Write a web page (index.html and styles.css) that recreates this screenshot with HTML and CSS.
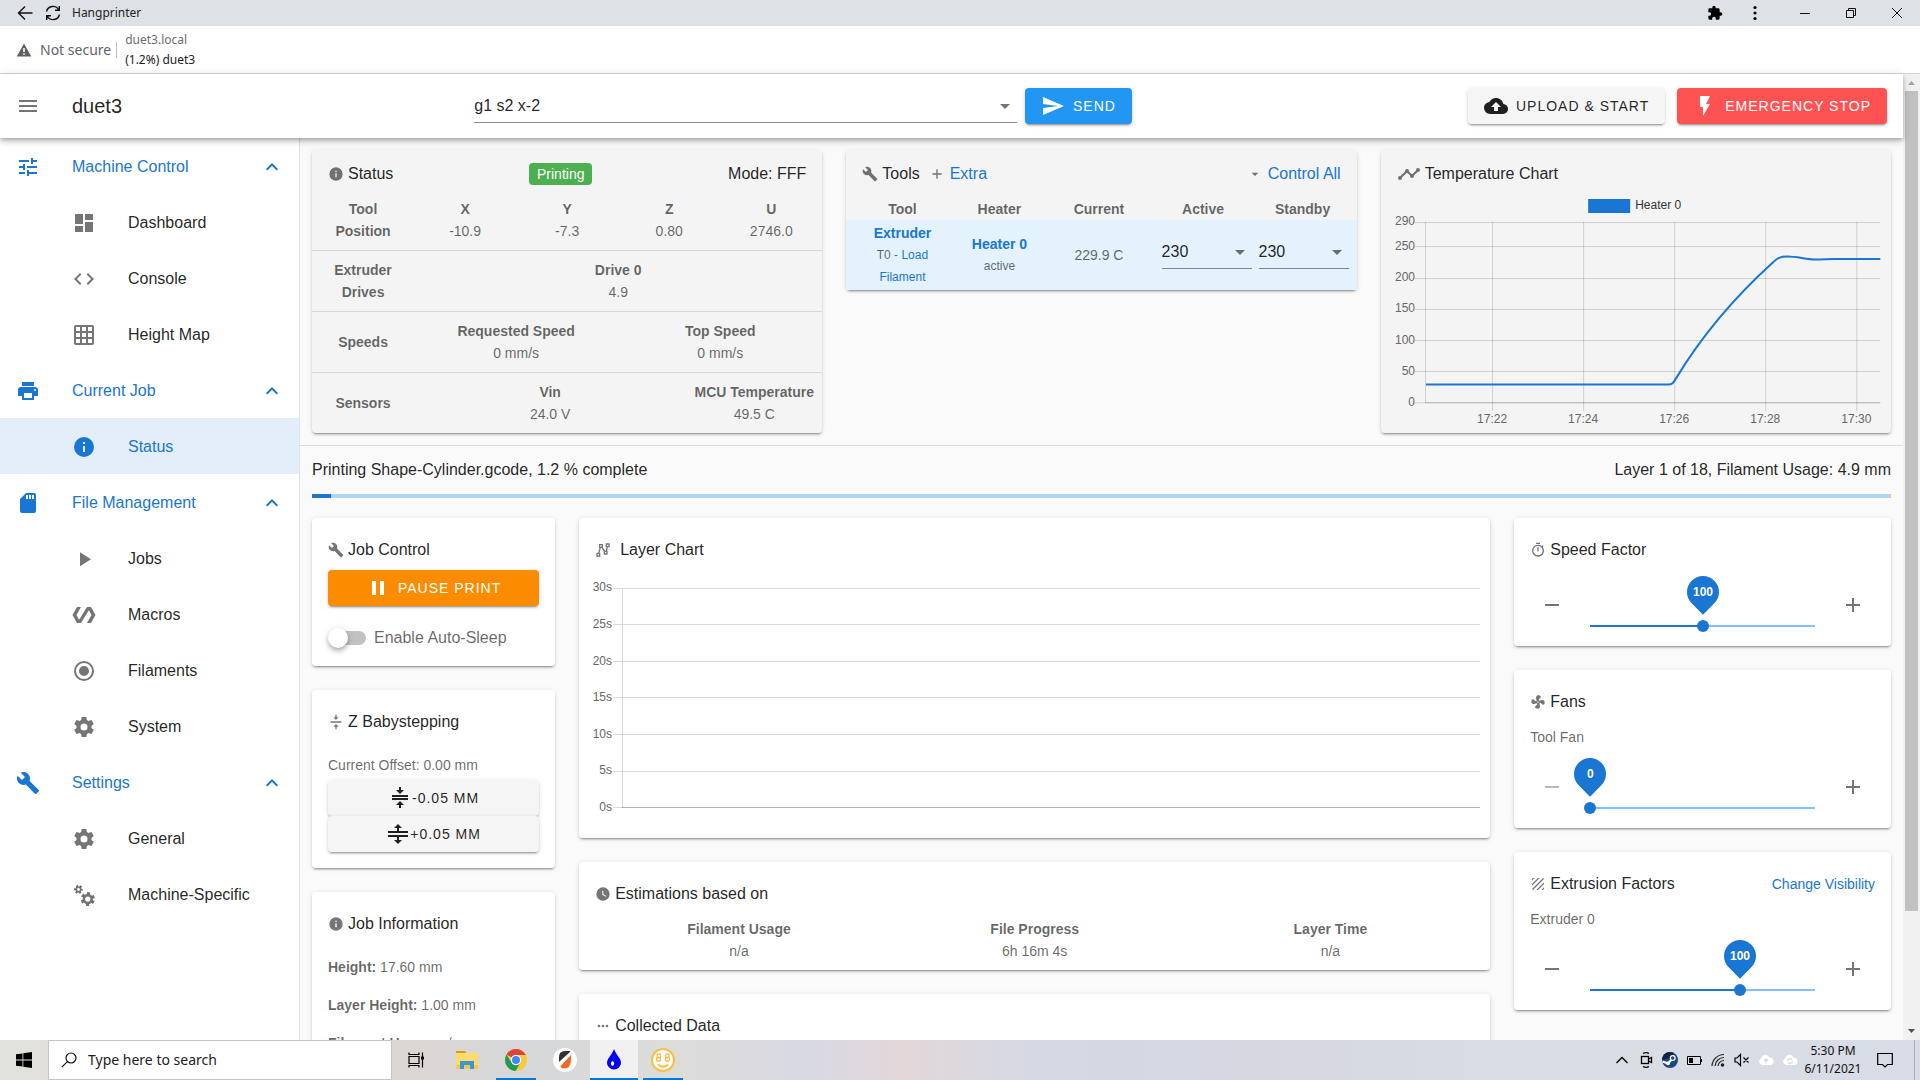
FILE: index.html
```html
<!DOCTYPE html>
<html lang="en">
<head>
<meta charset="utf-8">
<title>(1.2%) duet3</title>
<link rel="stylesheet" href="styles.css">
</head>
<body>
<svg class="sprite" aria-hidden="true">
  <symbol id="i-tune" viewBox="0 0 24 24"><path d="M3,17V19H9V17H3M3,5V7H13V5H3M13,21V19H21V17H13V15H11V21H13M7,9V11H3V13H7V15H9V9H7M21,13V11H11V13H21M15,9H17V7H21V5H17V3H15V9Z"/></symbol>
  <symbol id="i-dashboard" viewBox="0 0 24 24"><path d="M13,3V9H21V3M13,21H21V11H13M3,21H11V15H3M3,13H11V3H3V13Z"/></symbol>
  <symbol id="i-code" viewBox="0 0 24 24"><path d="M14.6,16.6L19.2,12L14.6,7.4L16,6L22,12L16,18L14.6,16.6M9.4,16.6L4.8,12L9.4,7.4L8,6L2,12L8,18L9.4,16.6Z"/></symbol>
  <symbol id="i-grid" viewBox="0 0 24 24"><path d="M10,4V8H14V4H10M16,4V8H20V4H16M16,10V14H20V10H16M16,16V20H20V16H16M14,20V16H10V20H14M8,20V16H4V20H8M8,14V10H4V14H8M8,8V4H4V8H8M10,14H14V10H10V14M4,2H20A2,2 0 0,1 22,4V20A2,2 0 0,1 20,22H4C2.92,22 2,21.1 2,20V4A2,2 0 0,1 4,2Z"/></symbol>
  <symbol id="i-printer" viewBox="0 0 24 24"><path d="M18,3H6V7H18M19,12A1,1 0 0,1 18,11A1,1 0 0,1 19,10A1,1 0 0,1 20,11A1,1 0 0,1 19,12M16,19H8V14H16M19,8H5A3,3 0 0,0 2,11V17H6V21H18V17H22V11A3,3 0 0,0 19,8Z"/></symbol>
  <symbol id="i-info" viewBox="0 0 24 24"><path d="M13,9H11V7H13M13,17H11V11H13M12,2A10,10 0 0,0 2,12A10,10 0 0,0 12,22A10,10 0 0,0 22,12A10,10 0 0,0 12,2Z"/></symbol>
  <symbol id="i-sd" viewBox="0 0 24 24"><path d="M18,8H16V4H18M15,8H13V4H15M12,8H10V4H12M18,2H10L4,8V20A2,2 0 0,0 6,22H18A2,2 0 0,0 20,20V4A2,2 0 0,0 18,2Z"/></symbol>
  <symbol id="i-play" viewBox="0 0 24 24"><path d="M8,5.14V19.14L19,12.14L8,5.14Z"/></symbol>
  <symbol id="i-polymer" viewBox="0 0 24 24"><path d="M19,4H15L7.1,16.63L4.5,12L9,4H5L0.5,12L5,20H9L16.89,7.37L19.5,12L15,20H19L23.5,12L19,4Z"/></symbol>
  <symbol id="i-radio" viewBox="0 0 24 24"><path d="M12,20A8,8 0 0,1 4,12A8,8 0 0,1 12,4A8,8 0 0,1 20,12A8,8 0 0,1 12,20M12,2A10,10 0 0,0 2,12A10,10 0 0,0 12,22A10,10 0 0,0 22,12A10,10 0 0,0 12,2M12,7A5,5 0 0,0 7,12A5,5 0 0,0 12,17A5,5 0 0,0 17,12A5,5 0 0,0 12,7Z"/></symbol>
  <symbol id="i-cog" viewBox="0 0 24 24"><path d="M12,15.5A3.5,3.5 0 0,1 8.5,12A3.5,3.5 0 0,1 12,8.5A3.5,3.5 0 0,1 15.5,12A3.5,3.5 0 0,1 12,15.5M19.43,12.97C19.47,12.65 19.5,12.33 19.5,12C19.5,11.67 19.47,11.34 19.43,11L21.54,9.37C21.73,9.22 21.78,8.95 21.66,8.73L19.66,5.27C19.54,5.05 19.27,4.96 19.05,5.05L16.56,6.05C16.04,5.66 15.5,5.32 14.87,5.07L14.5,2.42C14.46,2.18 14.25,2 14,2H10C9.75,2 9.54,2.18 9.5,2.42L9.13,5.07C8.5,5.32 7.96,5.66 7.44,6.05L4.95,5.05C4.73,4.96 4.46,5.05 4.34,5.27L2.34,8.73C2.21,8.95 2.27,9.22 2.46,9.37L4.57,11C4.53,11.34 4.5,11.67 4.5,12C4.5,12.33 4.53,12.65 4.57,12.97L2.46,14.63C2.27,14.78 2.21,15.05 2.34,15.27L4.34,18.73C4.46,18.95 4.73,19.03 4.95,18.95L7.44,17.94C7.96,18.34 8.5,18.68 9.13,18.93L9.5,21.58C9.54,21.82 9.75,22 10,22H14C14.25,22 14.46,21.82 14.5,21.58L14.87,18.93C15.5,18.67 16.04,18.34 16.56,17.94L19.05,18.95C19.27,19.03 19.54,18.95 19.66,18.73L21.66,15.27C21.78,15.05 21.73,14.78 21.54,14.63L19.43,12.97Z"/></symbol>
  <symbol id="i-cogs" viewBox="0 0 24 24"><g fill="none" stroke="currentColor"><circle cx="6.5" cy="6.5" r="2.3" stroke-width="1.7"/><circle cx="6.5" cy="6.5" r="3.7" stroke-width="1.6" stroke-dasharray="1.9 1.975" stroke-dashoffset="0.9"/><circle cx="15.8" cy="16" r="3.9" stroke-width="2.6"/><circle cx="15.8" cy="16" r="6" stroke-width="2.2" stroke-dasharray="3.1 3.18" stroke-dashoffset="-1.6"/></g></symbol>
  <symbol id="i-wrench" viewBox="0 0 24 24"><path d="M22.7,19L13.6,9.9C14.5,7.6 14,4.9 12.1,3C10.1,1 7.1,0.6 4.7,1.7L9,6L6,9L1.6,4.7C0.4,7.1 0.9,10.1 2.9,12.1C4.8,14 7.5,14.5 9.8,13.6L18.9,22.7C19.3,23.1 19.9,23.1 20.3,22.7L22.6,20.4C23.1,20 23.1,19.3 22.7,19Z"/></symbol>
  <symbol id="i-up" viewBox="0 0 24 24"><path d="M7.41,15.41L12,10.83L16.59,15.41L18,14L12,8L6,14L7.41,15.41Z"/></symbol>
  <symbol id="i-menu" viewBox="0 0 24 24"><path d="M3,6H21V8H3V6M3,11H21V13H3V11M3,16H21V18H3V16Z"/></symbol>
  <symbol id="i-down" viewBox="0 0 24 24"><path d="M7,10L12,15L17,10H7Z"/></symbol>
  <symbol id="i-send" viewBox="0 0 24 24"><path d="M2,21L23,12L2,3V10L17,12L2,14V21Z"/></symbol>
  <symbol id="i-upload" viewBox="0 0 24 24"><path d="M14,13V17H10V13H7L12,8L17,13M19.35,10.03C18.67,6.59 15.64,4 12,4C9.11,4 6.6,5.64 5.35,8.03C2.34,8.36 0,10.9 0,14A6,6 0 0,0 6,20H19A5,5 0 0,0 24,15C24,12.36 21.95,10.22 19.35,10.03Z"/></symbol>
  <symbol id="i-flash" viewBox="0 0 24 24"><path d="M7,2V13H10V22L17,10H13L17,2H7Z"/></symbol>
  <symbol id="i-pause" viewBox="0 0 24 24"><path d="M14,19H18V5H14M6,19H10V5H6V19Z"/></symbol>
  <symbol id="i-timeline" viewBox="0 0 24 24"><path d="M3,14L3.5,14.07L8.07,9.5C7.89,8.85 8.06,8.11 8.59,7.59C9.37,6.8 10.63,6.8 11.41,7.59C11.94,8.11 12.11,8.85 11.93,9.5L14.5,12.07L15,12C15.18,12 15.35,12 15.5,12.07L19.07,8.5C19,8.35 19,8.18 19,8A2,2 0 0,1 21,6A2,2 0 0,1 23,8A2,2 0 0,1 21,10C20.82,10 20.65,10 20.5,9.93L16.93,13.5C17,13.65 17,13.82 17,14A2,2 0 0,1 15,16A2,2 0 0,1 13,14L13.07,13.5L10.5,10.93C10.18,11 9.82,11 9.5,10.93L4.93,15.5L5,16A2,2 0 0,1 3,18A2,2 0 0,1 1,16A2,2 0 0,1 3,14Z"/></symbol>
  <symbol id="i-polyline" viewBox="0 0 24 24"><g fill="none" stroke="currentColor" stroke-width="2"><path d="M3,17H7V21H3ZM7,4H11V8H7ZM14,14H18V18H14ZM17,3H21V7H17ZM5.5,17L8,8M10.5,8L14.5,14M17,14L18.5,7"/></g></symbol>
  <symbol id="i-plus" viewBox="0 0 24 24"><path d="M19,13H13V19H11V13H5V11H11V5H13V11H19V13Z"/></symbol>
  <symbol id="i-minus" viewBox="0 0 24 24"><path d="M19,13H5V11H19V13Z"/></symbol>
  <symbol id="i-clock" viewBox="0 0 24 24"><path d="M12,2A10,10 0 0,0 2,12A10,10 0 0,0 12,22A10,10 0 0,0 22,12A10,10 0 0,0 12,2M16.2,16.2L11,13V7H12.5V12.2L17,14.9L16.2,16.2Z"/></symbol>
  <symbol id="i-timer" viewBox="0 0 24 24"><path d="M12,20A7,7 0 0,1 5,13A7,7 0 0,1 12,6A7,7 0 0,1 19,13A7,7 0 0,1 12,20M19.03,7.39L20.45,5.97C20,5.46 19.55,5 19.04,4.56L17.62,6C16.07,4.74 14.12,4 12,4A9,9 0 0,0 3,13A9,9 0 0,0 12,22C17,22 21,17.97 21,13C21,10.88 20.26,8.93 19.03,7.39M11,14H13V8H11M15,1H9V3H15V1Z"/></symbol>
  <symbol id="i-fan" viewBox="0 0 24 24"><path d="M12,11A1,1 0 0,0 11,12A1,1 0 0,0 12,13A1,1 0 0,0 13,12A1,1 0 0,0 12,11M12.5,2C17,2 17.11,5.57 14.75,6.75C13.76,7.24 13.32,8.29 13.13,9.22C13.61,9.42 14.03,9.73 14.35,10.13C18.05,8.13 22.03,8.92 22.03,12.5C22.03,17 18.46,17.1 17.28,14.73C16.78,13.74 15.72,13.3 14.79,13.11C14.59,13.59 14.28,14 13.88,14.34C15.87,18.03 15.08,22 11.5,22C7,22 6.91,18.42 9.27,17.24C10.25,16.75 10.69,15.71 10.89,14.79C10.4,14.59 9.97,14.27 9.65,13.87C5.96,15.85 2,15.07 2,11.5C2,7 5.56,6.89 6.74,9.26C7.24,10.25 8.29,10.68 9.22,10.87C9.41,10.39 9.73,9.97 10.14,9.65C8.15,5.96 8.94,2 12.5,2Z"/></symbol>
  <symbol id="i-texture" viewBox="0 0 24 24"><path d="M9.29,21H12.12L21,12.12V9.29M19,21C19.55,21 20.05,20.78 20.41,20.41C20.78,20.05 21,19.55 21,19V17L17,21M5,3A2,2 0 0,0 3,5V7L7,3M11.88,3L3,11.88V14.71L14.71,3M19.5,3.08L3.08,19.5C3.17,19.85 3.35,20.16 3.59,20.41C3.84,20.65 4.15,20.83 4.5,20.92L20.93,4.5C20.74,3.8 20.2,3.26 19.5,3.08Z"/></symbol>
  <symbol id="i-align" viewBox="0 0 24 24"><path d="M8,19H11V23H13V19H16L12,15L8,19M16,5H13V1H11V5H8L12,9L16,5M4,11V13H20V11H4Z"/></symbol>
  <symbol id="i-collapse" viewBox="0 0 24 24"><path d="M4,12H20V14H4V12M4,9H20V11H4V9M16,4L12,8L8,4H11V1H13V4H16M8,19L12,15L16,19H13V22H11V19H8Z"/></symbol>
  <symbol id="i-split" viewBox="0 0 24 24"><path d="M8,18H11V15H2V13H22V15H13V18H16L12,22L8,18M12,2L8,6H11V9H2V11H22V9H13V6H16L12,2Z"/></symbol>
  <symbol id="i-dots" viewBox="0 0 24 24"><path d="M16,12A2,2 0 0,1 18,10A2,2 0 0,1 20,12A2,2 0 0,1 18,14A2,2 0 0,1 16,12M10,12A2,2 0 0,1 12,10A2,2 0 0,1 14,12A2,2 0 0,1 12,14A2,2 0 0,1 10,12M4,12A2,2 0 0,1 6,10A2,2 0 0,1 8,12A2,2 0 0,1 6,14A2,2 0 0,1 4,12Z"/></symbol>
  <symbol id="i-puzzle" viewBox="0 0 24 24"><path d="M20.5,11H19V7C19,5.89 18.1,5 17,5H13V3.5A2.5,2.5 0 0,0 10.5,1A2.5,2.5 0 0,0 8,3.5V5H4A2,2 0 0,0 2,7V10.8H3.5C5,10.8 6.2,12 6.2,13.5C6.2,15 5,16.2 3.5,16.2H2V20A2,2 0 0,0 4,22H7.8V20.5C7.8,19 9,17.8 10.5,17.8C12,17.8 13.2,19 13.2,20.5V22H17A2,2 0 0,0 19,20V16H20.5A2.5,2.5 0 0,0 23,13.5A2.5,2.5 0 0,0 20.5,11Z"/></symbol>
</svg>

<header class="titlebar">
  <button class="tb-btn" aria-label="Back"><svg class="ic16" viewBox="0 0 16 16" fill="none" stroke="#111" stroke-width="1.4"><path d="M15.5 8H1.5M8 1.5L1.5 8L8 14.500"/></svg></button>
  <button class="tb-btn" aria-label="Reload"><svg class="ic16" viewBox="0 0 16 16" fill="none" stroke="#111" stroke-width="1.4"><path d="M1.500 6.500A6.600 6.600 0 0 1 13.800 5M14.500 9.500A6.600 6.600 0 0 1 2.200 11M14.300 1V5.300H10M1.700 15V10.700H6"/></svg></button>
  <span class="tb-title">Hangprinter</span>
  <div class="tb-right">
    <button class="tb-btn tb-menu" aria-label="Extensions"><svg class="ic16"><use href="#i-puzzle"/></svg></button>
    <button class="tb-btn tb-menu" aria-label="More"><svg class="ic16" viewBox="0 0 16 16"><circle cx="8" cy="2.500" r="1.600"/><circle cx="8" cy="8" r="1.600"/><circle cx="8" cy="13.500" r="1.600"/></svg></button>
    <button class="tb-btn tb-win" aria-label="Minimize"><svg class="ic12" viewBox="0 0 12 12" stroke="#111"><path d="M1 6.500H11"/></svg></button>
    <button class="tb-btn tb-win" aria-label="Restore"><svg class="ic12" viewBox="0 0 12 12" fill="none" stroke="#111"><path d="M1.500 3.500H8.500V10.500H1.500ZM3.500 3.500V1.500H10.500V8.500H8.500"/></svg></button>
    <button class="tb-btn tb-win" aria-label="Close"><svg class="ic12" viewBox="0 0 12 12" stroke="#111"><path d="M1 1L11 11M11 1L1 11"/></svg></button>
  </div>
</header>
<div class="urlbar">
  <svg class="ic16" viewBox="0 0 16 16"><path fill="#5f6368" fill-rule="evenodd" d="M8 1.500L15.300 14.500H.7ZM7.200 6V10H8.800V6ZM7.200 11.200V12.800H8.800V11.200Z"/></svg>
  <span class="insecure">Not secure</span>
  <div class="url"><span class="host">duet3.local</span><span>(1.2%) duet3</span></div>
</div>

<div class="viewport">
  <div class="app">
    <header class="appbar">
      <button class="icon-btn" aria-label="Menu"><svg class="ic24"><use href="#i-menu"/></svg></button>
      <h1 class="machine">duet3</h1>
      <div class="combo"><input type="text" value="g1 s2 x-2" aria-label="Send code"><svg class="ic24"><use href="#i-down"/></svg></div>
      <button class="btn btn-send"><svg class="ic24"><use href="#i-send"/></svg>SEND</button>
      <div class="spacer"></div>
      <button class="btn btn-plain"><svg class="ic24"><use href="#i-upload"/></svg>UPLOAD &amp; START</button>
      <button class="btn btn-stop"><svg class="ic24"><use href="#i-flash"/></svg>EMERGENCY STOP</button>
    </header>
    <div class="body">
      <nav class="sidebar">
        <button class="nav-group"><svg class="ic24"><use href="#i-tune"/></svg><span>Machine Control</span><svg class="ic24"><use href="#i-up"/></svg></button>
        <a class="nav-item" href="#"><svg class="ic24"><use href="#i-dashboard"/></svg>Dashboard</a>
        <a class="nav-item" href="#"><svg class="ic24"><use href="#i-code"/></svg>Console</a>
        <a class="nav-item" href="#"><svg class="ic24"><use href="#i-grid"/></svg>Height Map</a>
        <button class="nav-group"><svg class="ic24"><use href="#i-printer"/></svg><span>Current Job</span><svg class="ic24"><use href="#i-up"/></svg></button>
        <a class="nav-item active" href="#"><svg class="ic24"><use href="#i-info"/></svg>Status</a>
        <button class="nav-group"><svg class="ic24"><use href="#i-sd"/></svg><span>File Management</span><svg class="ic24"><use href="#i-up"/></svg></button>
        <a class="nav-item" href="#"><svg class="ic24"><use href="#i-play"/></svg>Jobs</a>
        <a class="nav-item" href="#"><svg class="ic24"><use href="#i-polymer"/></svg>Macros</a>
        <a class="nav-item" href="#"><svg class="ic24"><use href="#i-radio"/></svg>Filaments</a>
        <a class="nav-item" href="#"><svg class="ic24"><use href="#i-cog"/></svg>System</a>
        <button class="nav-group"><svg class="ic24"><use href="#i-wrench"/></svg><span>Settings</span><svg class="ic24"><use href="#i-up"/></svg></button>
        <a class="nav-item" href="#"><svg class="ic24"><use href="#i-cog"/></svg>General</a>
        <a class="nav-item" href="#"><svg class="ic24"><use href="#i-cogs"/></svg>Machine-Specific</a>
      </nav>

      <main class="main">
        <section class="top">
          <article class="card tinted">
            <header class="card-head">
              <h2><svg class="ic16"><use href="#i-info"/></svg>Status</h2>
              <span class="chip">Printing</span>
              <span>Mode: FFF</span>
            </header>
            <div class="srow">
              <strong>Tool<br>Position</strong>
              <dl><div><dt>X</dt><dd>-10.9</dd></div><div><dt>Y</dt><dd>-7.3</dd></div><div><dt>Z</dt><dd>0.80</dd></div><div><dt>U</dt><dd>2746.0</dd></div></dl>
            </div>
            <div class="srow">
              <strong>Extruder<br>Drives</strong>
              <dl><div><dt>Drive 0</dt><dd>4.9</dd></div></dl>
            </div>
            <div class="srow">
              <strong>Speeds</strong>
              <dl><div><dt>Requested Speed</dt><dd>0 mm/s</dd></div><div><dt>Top Speed</dt><dd>0 mm/s</dd></div></dl>
            </div>
            <div class="srow">
              <strong>Sensors</strong>
              <dl class="sensors"><div><dt>Vin</dt><dd>24.0 V</dd></div><div><dt>MCU Temperature</dt><dd>49.5 C</dd></div></dl>
            </div>
          </article>

          <article class="card tinted">
            <header class="card-head">
              <h2><svg class="ic16"><use href="#i-wrench"/></svg>Tools</h2>
              <a class="head-link extra" href="#"><svg class="ic16"><use href="#i-plus"/></svg>Extra</a>
              <a class="head-link" href="#"><svg class="ic16"><use href="#i-down"/></svg>Control All</a>
            </header>
            <table class="tools">
              <colgroup><col class="c-tool"><col class="c-heater"><col class="c-current"><col class="c-active"><col class="c-standby"></colgroup>
              <thead><tr><th>Tool</th><th>Heater</th><th>Current</th><th>Active</th><th>Standby</th></tr></thead>
              <tbody><tr>
                <td><a class="strong" href="#">Extruder</a><small>T0 - <a href="#">Load<br>Filament</a></small></td>
                <td><a class="strong" href="#">Heater 0</a><small>active</small></td>
                <td>229.9 C</td>
                <td><div class="temp"><select aria-label="Active temperature"><option>230</option></select><svg class="ic24"><use href="#i-down"/></svg></div></td>
                <td><div class="temp"><select aria-label="Standby temperature"><option>230</option></select><svg class="ic24"><use href="#i-down"/></svg></div></td>
              </tr></tbody>
            </table>
          </article>

          <article class="card tinted">
            <header class="card-head">
              <h2><svg class="ic24"><use href="#i-timeline"/></svg>Temperature Chart</h2>
            </header>
            <svg class="chart" viewBox="0 0 510 235" role="img" aria-label="Temperature chart">
              <rect x="207" y="1" width="42" height="14" fill="#1976d2"/>
              <text x="254" y="11" fill="#333">Heater 0</text>
              <g class="grid-lines">
                <path d="M34 24.500H499M34 48.500H499M34 80.500H499M34 111.500H499M34 142.500H499M34 173.500H499"/>
                <path d="M44.500 24V204M111.500 24V213M202.500 24V213M293.500 24V213M384.500 24V213M475.500 24V213M34 204.500H44"/>
                <path class="zero" d="M44 204.500H499"/>
              </g>
              <g class="y-labels">
                <text x="34" y="27">290</text><text x="34" y="52">250</text><text x="34" y="83">200</text><text x="34" y="114">150</text><text x="34" y="146">100</text><text x="34" y="177">50</text><text x="34" y="208">0</text>
              </g>
              <g class="x-labels">
                <text x="111" y="225">17:22</text><text x="202" y="225">17:24</text><text x="293" y="225">17:26</text><text x="384" y="225">17:28</text><text x="475" y="225">17:30</text>
              </g>
              <path d="M45 186.500H287C291 186.500 292 185 295 180C318 142 346 106 391 65C396 60 399 58.500 406 58.500C417 58.500 424 61.500 435 61.500C442 61.500 446 61 454 61H499" fill="none" stroke="#1976d2" stroke-width="2"/>
            </svg>
          </article>
        </section>

        <section class="job">
          <div class="job-line"><span>Printing Shape-Cylinder.gcode, 1.2 % complete</span><span>Layer 1 of 18, Filament Usage: 4.9 mm</span></div>
          <div class="progress"><div style="width:1.2%"></div></div>

          <div class="cols">
            <div class="col">
              <article class="card">
                <header class="card-head tall"><h2><svg class="ic16"><use href="#i-wrench"/></svg>Job Control</h2></header>
                <div class="card-body">
                  <button class="btn btn-pause"><svg class="ic24"><use href="#i-pause"/></svg>PAUSE PRINT</button>
                  <label class="switch"><input type="checkbox" role="switch">Enable Auto-Sleep</label>
                </div>
              </article>
              <article class="card">
                <header class="card-head tall"><h2><svg class="ic16"><use href="#i-align"/></svg>Z Babystepping</h2></header>
                <div class="card-body text">
                  <p>Current Offset: 0.00 mm</p>
                  <div class="stack">
                    <button class="btn btn-plain tight"><svg class="ic24"><use href="#i-collapse"/></svg>-0.05 MM</button>
                    <button class="btn btn-plain tight"><svg class="ic24"><use href="#i-split"/></svg>+0.05 MM</button>
                  </div>
                </div>
              </article>
              <article class="card">
                <header class="card-head tall"><h2><svg class="ic16"><use href="#i-info"/></svg>Job Information</h2></header>
                <div class="card-body text facts">
                  <p><strong>Height:</strong> 17.60 mm</p>
                  <p><strong>Layer Height:</strong> 1.00 mm</p>
                  <p><strong>Filament Usage:</strong> n/a</p>
                </div>
              </article>
            </div>

            <div class="col">
              <article class="card">
                <header class="card-head tall"><h2 class="wide-gap"><svg class="ic16"><use href="#i-polyline"/></svg>Layer Chart</h2></header>
                <svg class="chart layer" viewBox="0 0 911 268" role="img" aria-label="Layer chart">
                  <g class="grid-lines">
                    <path d="M34 18.500H901M34 54.500H901M34 91.500H901M34 127.500H901M34 164.500H901M34 201.500H901M34 237.500H44M43.500 18V237"/>
                    <path class="zero" d="M43 237.500H901"/>
                  </g>
                  <g class="y-labels">
                    <text x="33" y="21">30s</text><text x="33" y="58">25s</text><text x="33" y="95">20s</text><text x="33" y="131">15s</text><text x="33" y="168">10s</text><text x="33" y="204">5s</text><text x="33" y="241">0s</text>
                  </g>
                </svg>
              </article>
              <article class="card">
                <header class="card-head tall"><h2><svg class="ic16"><use href="#i-clock"/></svg>Estimations based on</h2></header>
                <dl class="estimates">
                  <div><dt>Filament Usage</dt><dd>n/a</dd></div>
                  <div><dt>File Progress</dt><dd>6h 16m 4s</dd></div>
                  <div><dt>Layer Time</dt><dd>n/a</dd></div>
                </dl>
              </article>
              <article class="card">
                <header class="card-head tall"><h2><svg class="ic16"><use href="#i-dots"/></svg>Collected Data</h2></header>
              </article>
            </div>

            <div class="col">
              <article class="card">
                <header class="card-head tall"><h2><svg class="ic16"><use href="#i-timer"/></svg>Speed Factor</h2></header>
                <div class="slider-row">
                  <button class="icon-btn" aria-label="Decrease speed"><svg class="ic24"><use href="#i-minus"/></svg></button>
                  <div class="slider" style="--value:50%"><input type="range" min="0" max="200" value="100" aria-label="Speed factor"><output><span>100</span></output></div>
                  <button class="icon-btn" aria-label="Increase speed"><svg class="ic24"><use href="#i-plus"/></svg></button>
                </div>
              </article>
              <article class="card">
                <header class="card-head tall"><h2><svg class="ic16"><use href="#i-fan"/></svg>Fans</h2></header>
                <p class="slider-name">Tool Fan</p>
                <div class="slider-row">
                  <button class="icon-btn" disabled aria-label="Decrease fan"><svg class="ic24"><use href="#i-minus"/></svg></button>
                  <div class="slider" style="--value:0%"><input type="range" min="0" max="100" value="0" aria-label="Tool fan"><output><span>0</span></output></div>
                  <button class="icon-btn" aria-label="Increase fan"><svg class="ic24"><use href="#i-plus"/></svg></button>
                </div>
              </article>
              <article class="card">
                <header class="card-head tall"><h2><svg class="ic16"><use href="#i-texture"/></svg>Extrusion Factors</h2><a class="small-link" href="#">Change Visibility</a></header>
                <p class="slider-name">Extruder 0</p>
                <div class="slider-row">
                  <button class="icon-btn" aria-label="Decrease extrusion"><svg class="ic24"><use href="#i-minus"/></svg></button>
                  <div class="slider" style="--value:66.67%"><input type="range" min="0" max="150" value="100" aria-label="Extruder 0"><output><span>100</span></output></div>
                  <button class="icon-btn" aria-label="Increase extrusion"><svg class="ic24"><use href="#i-plus"/></svg></button>
                </div>
              </article>
            </div>
          </div>
        </section>
      </main>
    </div>
  </div>
  <div class="scrollbar" aria-hidden="true">
    <svg viewBox="0 0 17 17"><path fill="#a3a3a3" d="M5 11L8.500 7L12 11Z"/></svg>
    <div class="lane"><div class="thumb"></div></div>
    <svg viewBox="0 0 17 17"><path fill="#505050" d="M5 6L8.500 10L12 6Z"/></svg>
  </div>
</div>

<footer class="taskbar">
  <button class="start" aria-label="Start"><svg class="ic16" viewBox="0 0 16 16"><path d="M0 2.300L6.500 1.400V7.600H0ZM7.300 1.300L16 0V7.600H7.300ZM0 8.400H6.500V14.600L0 13.700ZM7.300 8.400H16V16L7.300 14.700Z"/></svg></button>
  <label class="search"><svg class="ic16" viewBox="0 0 16 16" fill="none" stroke="#111" stroke-width="1.200"><circle cx="10" cy="6" r="5"/><path d="M6.400 9.600L.8 15.200"/></svg><input type="text" placeholder="Type here to search"></label>
  <button class="task first" aria-label="Task view"><svg class="ic16" viewBox="0 0 16 16" fill="none" stroke="#000" stroke-width="1.200"><path d="M1 4.500H11V11.500H1ZM1 .5V2.500H11V.5M1 15.500V13.500H11V15.500M14.500 .5V15.500"/><path d="M13 4.500H16V7.500H13Z" fill="#000" stroke="none"/></svg></button>
  <button class="task" aria-label="File Explorer"><svg class="ic24" viewBox="0 0 24 24"><path fill="#d89b12" d="M1 3H10L12 6H1Z"/><path fill="#fddc6c" d="M1 5H23V21H1Z"/><path fill="#f7c948" d="M1 17H23V21H1Z"/><path fill="#3d94d9" d="M5 13H19V21H15V17H9V21H5Z"/></svg></button>
  <button class="task open" aria-label="Chrome"><svg class="ic24" viewBox="0 0 24 24"><circle cx="12" cy="12" r="11" fill="#fbc93a"/><path fill="#db4437" d="M12 12L2.500 6.500A11 11 0 0 1 21.500 6.500L22 7H12Z"/><path fill="#1a9a55" d="M2.500 6.500A11 11 0 0 0 11.500 23L16.500 14.500L12 12L7.500 14.500Z"/><circle cx="12" cy="12" r="5.200" fill="#fff"/><circle cx="12" cy="12" r="4" fill="#4285f4"/></svg></button>
  <button class="task" aria-label="PrusaSlicer"><svg class="ic24" viewBox="0 0 24 24"><circle cx="12" cy="12" r="12" fill="#fff"/><path fill="#333" d="M6 14V9Q6 3 12 3H16.500Q17.500 3 17 4Z"/><path fill="#f26a21" d="M7.500 18L18 7V13Q17.500 20.500 11 20.500Q8 20.500 7.500 18Z"/></svg></button>
  <button class="task current" aria-label="Hangprinter"><svg class="ic24" viewBox="0 0 24 24"><path fill="#0000fa" d="M12 2C14 8 19 11 19 16A7 6.500 0 0 1 5 16C5 11 10 8 12 2Z"/><ellipse cx="10.500" cy="16.500" rx="1.600" ry="2.200" fill="#fff"/></svg></button>
  <button class="task open" aria-label="Smiley"><svg class="ic24" viewBox="0 0 24 24" fill="none" stroke="#fbbd45" stroke-width="1.300"><circle cx="12" cy="12" r="11" fill="#fff" stroke-width="2"/><rect x="6" y="6" width="3.500" height="3.500" rx="1.200"/><rect x="5.500" y="9.500" width="4" height="3.500" rx="1.200"/><rect x="14.500" y="6" width="3.500" height="3.500" rx="1.200"/><rect x="14.500" y="9.500" width="4" height="3.500" rx="1.200"/><path d="M7 16.500Q12 21 17 16.500" stroke-width="1.800"/></svg></button>
  <div class="tray">
    <svg class="ic16" viewBox="0 0 16 16" fill="none" stroke="#000" stroke-width="1.300"><path d="M2.500 11L8 5.500L13.500 11"/></svg>
    <svg class="ic16" viewBox="0 0 16 16" fill="none" stroke="#000" stroke-width="1.300"><rect x="3.500" y="4.500" width="7" height="7"/><path d="M10.500 7L13.500 5.500V10.500L10.500 9M5 1.500Q8 -.2 11 1.500M5 14.500Q8 16.200 11 14.500"/></svg>
    <svg class="ic16" viewBox="0 0 16 16"><circle cx="8" cy="8" r="8" fill="#1b4a83"/><path d="M0 8A8 8 0 0 1 12 1.100L8 6Z" fill="#13223f"/><path d="M.5 9.500L6 11.500L11 6" fill="none" stroke="#fff" stroke-width="2"/><circle cx="10.700" cy="6" r="2.400" fill="#1b4a83" stroke="#fff" stroke-width="1.200"/><circle cx="6" cy="11.300" r="2" fill="#fff"/></svg>
    <svg class="ic16" viewBox="0 0 16 16" fill="none" stroke="#000"><path d="M1.500 4.500H14.500V12.500H1.500ZM15.500 7V10"/><path d="M3 6H7V11H3Z" fill="#000" stroke="none"/></svg>
    <svg class="ic16" viewBox="0 0 16 16" fill="none" stroke="#222" stroke-width="1.200"><path d="M2 14A12 12 0 0 1 14 2.500M5 14A9 9 0 0 1 14 5.500M8 14A6 6 0 0 1 14 8.500"/><circle cx="12.500" cy="13" r="1.200" fill="#222"/></svg>
    <svg class="ic16" viewBox="0 0 16 16" fill="none" stroke="#000" stroke-width="1.200"><path d="M1 6H3L6.500 2.500V13.500L3 10H1ZM9.500 5.500L14.500 10.500M14.500 5.500L9.500 10.500"/></svg>
    <svg class="ic16" viewBox="0 0 16 16"><path fill="#fff" d="M4 13A3.500 3.500 0 0 1 3 6.500A4.500 4.500 0 0 1 11.500 5.500A4 3.800 0 0 1 12.500 13Z"/><path d="M8 11.500V7M6 8.800L8 6.800L10 8.800" stroke="#d5d8df" fill="none" stroke-width="1.300"/></svg>
    <svg class="ic16" viewBox="0 0 16 16"><path fill="#fff" d="M4 13A3.500 3.500 0 0 1 3 6.500A4.500 4.500 0 0 1 11.500 5.500A4 3.800 0 0 1 12.500 13Z"/><path d="M5.500 9A2.600 2.600 0 0 1 10 7.500M10.500 9A2.600 2.600 0 0 1 6 10.800" stroke="#d5d8df" fill="none" stroke-width="1.300"/></svg>
  </div>
  <div class="clock"><span>5:30 PM</span><span>6/11/2021</span></div>
  <button class="notify" aria-label="Notifications"><svg class="ic16" viewBox="0 0 16 16" fill="none" stroke="#000" stroke-width="1.200"><path d="M.7 1.500H15.300V12.500H10.500L8 15L5.500 12.500H.7Z"/></svg></button>
</footer>
</body>
</html>
```
FILE: styles.css
```css
:root {
  --primary: #1976d2;
  --text: rgba(0, 0, 0, .87);
  --muted: rgba(0, 0, 0, .6);
  --icon: rgba(0, 0, 0, .54);
  --line: rgba(0, 0, 0, .12);
}

* { box-sizing: border-box; }

body {
  margin: 0;
  height: 100vh;
  display: flex;
  flex-direction: column;
  overflow: hidden;
  background: #fff;
  color: var(--text);
  font: 16px/24px "Liberation Sans", Arial, sans-serif;
}

h1, h2, p, dl, dd { margin: 0; }
a { color: var(--primary); text-decoration: none; }
button, input, select { font: inherit; color: inherit; }
button { border: 0; padding: 0; background: none; }
svg { flex: none; }

.sprite { position: absolute; width: 0; height: 0; }
.ic12 { width: 12px; height: 12px; }
.ic16 { width: 16px; height: 16px; }
.ic24 { width: 24px; height: 24px; }
svg use { fill: currentColor; }

/* Window chrome */
.titlebar {
  display: flex;
  align-items: center;
  flex: none;
  height: 26px;
  padding-left: 17px;
  background: #dee1e6;
  font: 12px/16px "Segoe UI", "Noto Sans", sans-serif;
  color: #222;
}
.tb-btn { display: grid; place-items: center; width: 16px; margin-right: 12px; color: #000; }
.tb-btn + .tb-title { margin-left: -1px; }
.tb-right { display: flex; margin-left: auto; }
.tb-right .tb-btn { margin: 0; }
.tb-menu { width: 40px; }
.tb-right .tb-menu + .tb-win { margin-left: 7px; }
.tb-right .tb-win { width: 46px; }

.urlbar {
  display: flex;
  align-items: center;
  flex: none;
  height: 48px;
  padding-left: 16px;
  border-bottom: 1px solid #d5d5d5;
  font: 12px/20px "Segoe UI", "Noto Sans", sans-serif;
  color: #222;
}
.insecure { margin-left: 8px; font-size: 14px; color: #5f6368; }
.url {
  position: relative;
  display: flex;
  flex-direction: column;
  margin-left: 5px;
  padding-left: 9px;
}
.url::before { content: ""; position: absolute; left: 0; top: 12px; height: 16px; width: 1px; background: #bbb; }
.host { color: #6a6d70; }

.viewport { display: flex; flex: 1; min-height: 0; }
.app { display: flex; flex-direction: column; flex: 1; min-width: 0; }

.scrollbar { display: flex; flex-direction: column; width: 17px; background: #f1f1f1; }
.lane { flex: 1; padding: 0 2px; }
.thumb { height: 88%; background: #c1c1c1; }

/* App bar */
.appbar {
  position: relative;
  z-index: 2;
  display: flex;
  align-items: center;
  flex: none;
  height: 64px;
  padding: 0 16px;
  background: #fff;
  box-shadow: 0 2px 4px -1px rgba(0,0,0,.2), 0 4px 5px rgba(0,0,0,.14), 0 1px 10px rgba(0,0,0,.12);
}
.icon-btn { display: grid; place-items: center; color: var(--icon); }
.icon-btn:disabled { opacity: .5; }
.machine { flex: 401; padding-left: 32px; font-size: 20px; font-weight: 400; }
.combo {
  display: flex;
  flex: 541;
  min-width: 0;
  height: 34px;
  align-items: center;
  border-bottom: 1px solid rgba(0,0,0,.45);
  color: var(--icon);
}
.combo input { flex: 1; min-width: 0; border: 0; padding: 0; outline: 0; background: none; color: var(--text); }
.spacer { flex: 335; }

.btn {
  display: flex;
  align-items: center;
  justify-content: center;
  gap: 8px;
  height: 36px;
  padding: 0 16px;
  border-radius: 4px;
  font-size: 14px;
  letter-spacing: 1px;
  box-shadow: 0 3px 1px -2px rgba(0,0,0,.2), 0 2px 2px rgba(0,0,0,.14), 0 1px 5px rgba(0,0,0,.12);
}
.btn-send { margin-left: 8px; background: #2196f3; color: #fff; }
.btn-plain { background: #f5f5f5; }
.btn-stop { margin-left: 12px; background: #ff5252; color: #fff; }
.btn-pause { width: 100%; background: #fb8c00; color: #fff; }
.tight { width: 100%; gap: 0; }

/* Sidebar */
.body { display: flex; flex: 1; min-height: 0; }
.sidebar { flex: none; width: 300px; border-right: 1px solid var(--line); background: #fff; overflow: hidden; }
.nav-group, .nav-item { display: flex; align-items: center; width: 100%; height: 56px; padding-top: 1px; text-align: left; }
.nav-group { gap: 32px; padding-left: 16px; padding-right: 15px; color: var(--primary); }
.nav-group span { flex: 1; }
.nav-item { gap: 32px; padding-left: 72px; color: var(--text); }
.nav-item svg { color: var(--icon); }
.nav-item.active { background: #e3eefa; color: var(--primary); }
.nav-item.active svg { color: var(--primary); }

/* Main area */
.main { flex: 1; min-width: 0; overflow: hidden; background: #fafafa; }
.top {
  display: grid;
  grid-template-columns: repeat(3, minmax(0, 1fr));
  align-items: start;
  gap: 24px;
  padding: 12px;
  border-bottom: 1px solid var(--line);
}
.card {
  border-radius: 4px;
  background: #fff;
  box-shadow: 0 3px 1px -2px rgba(0,0,0,.2), 0 2px 2px rgba(0,0,0,.14), 0 1px 5px rgba(0,0,0,.12);
}
.tinted { background: #f4f4f4; }
.card-head { display: flex; align-items: center; justify-content: space-between; height: 48px; padding: 0 16px; }
.card-head.tall { height: 52px; padding-top: 12px; }
.card-head h2 { display: flex; align-items: center; gap: 4px; font-size: 16px; font-weight: 400; }
.card-head svg { color: var(--icon); }
.card-head h2.wide-gap { gap: 9px; }
.chip { padding: 0 8px; border-radius: 4px; background: #4caf50; color: #fff; font-size: 14px; line-height: 22px; }

.srow {
  display: grid;
  grid-template-columns: 1fr 4fr;
  align-items: center;
  padding: 8px 0;
  border-top: 1px solid var(--line);
  color: var(--muted);
  font-size: 14px;
  line-height: 22px;
  text-align: center;
}
.card-head + .srow { padding-top: 0; border-top: 0; }
.srow dl { display: flex; }
.srow dl div { flex: 1; }
.srow dl.sensors div:first-child { flex: 2; }
dt { font-weight: 700; }

.head-link { display: flex; align-items: center; gap: 5px; }
.extra { margin: 0 auto 0 9px; }

.tools { width: 100%; table-layout: fixed; border-collapse: collapse; font-size: 14px; line-height: 22px; text-align: center; color: var(--muted); }
.c-tool { width: 22%; }
.c-current { width: 23%; }
.c-heater { width: 16%; }
.c-active { width: 19%; }
.c-standby { width: 20%; }
.tools th { padding: 0; }
.tools th:nth-child(n+4) { padding-right: 6px; }
.tools td { padding: 2px 4px; }
.tools tbody tr { background: #e3f2fd; }
.tools small { display: block; font-size: 12px; }
.strong { display: block; font-weight: 700; }
.temp { display: flex; width: 90px; align-items: center; height: 34px; margin-top: -6px; border-bottom: 1px solid rgba(0,0,0,.45); color: var(--icon); }
.temp select { flex: 1; min-width: 0; border: 0; padding: 0; appearance: none; background: none; font-size: 16px; color: var(--text); }

.chart { display: block; width: 100%; font: 12px "Liberation Sans", Arial, sans-serif; }
.grid-lines { fill: none; stroke: rgba(0,0,0,.15); }
.grid-lines .zero { stroke: rgba(0,0,0,.3); }
.y-labels { fill: #666; text-anchor: end; }
.x-labels { fill: #666; text-anchor: middle; }

.job { padding: 12px; }
.job-line { display: flex; justify-content: space-between; }
.progress { height: 4px; margin: 12px 0 20px; background: #b7d3ef; }
.progress div { height: 100%; background: var(--primary); }
.cols { display: grid; grid-template-columns: repeat(12, minmax(0, 1fr)); gap: 24px; align-items: start; }
.col { display: flex; flex-direction: column; gap: 24px; grid-column: span 2; }
.col:nth-child(2) { grid-column: span 7; }
.col:nth-child(3) { grid-column: span 3; }

.card-body { padding: 0 16px 16px; }
.card-body.text { padding-top: 12px; color: var(--muted); font-size: 14px; line-height: 22px; }
.stack { margin-top: 4px; color: var(--text); }
.facts { display: grid; gap: 16px; }

.switch { display: flex; align-items: center; gap: 8px; margin-top: 20px; color: var(--muted); }
.switch input {
  position: relative;
  appearance: none;
  width: 32px;
  height: 14px;
  margin: 0 0 0 6px;
  border-radius: 7px;
  background: #c2c2c2;
}
.switch input::before {
  content: "";
  position: absolute;
  left: -6px;
  top: -3px;
  width: 20px;
  height: 20px;
  border-radius: 50%;
  background: #fff;
  box-shadow: 0 2px 4px -1px rgba(0,0,0,.2), 0 4px 5px rgba(0,0,0,.14), 0 1px 10px rgba(0,0,0,.12);
}

.estimates { display: grid; grid-template-columns: repeat(3, 1fr); padding: 4px 12px 8px; color: var(--muted); font-size: 14px; line-height: 22px; text-align: center; }

.slider-name { padding: 4px 16px; color: var(--muted); font-size: 14px; line-height: 22px; }
.small-link { font-size: 14px; }
.slider-row { display: grid; grid-template-columns: 76px 1fr 76px; height: 76px; }
.slider-row .icon-btn { height: 70px; }
.slider { position: relative; height: 12px; margin-top: 50px; }
.slider::before { content: ""; position: absolute; inset: 5px 0; background: linear-gradient(to right, var(--primary) var(--value), #82bfff var(--value)); }
.slider input { position: absolute; appearance: none; left: -6px; width: calc(100% + 12px); height: 12px; margin: 0; background: none; }
.slider input::-webkit-slider-thumb { appearance: none; width: 12px; height: 12px; border-radius: 50%; background: var(--primary); }
.slider output {
  position: absolute;
  left: calc(var(--value) - 16px);
  bottom: 24px;
  display: grid;
  place-items: center;
  width: 32px;
  height: 32px;
  border-radius: 50% 50% 50% 0;
  background: var(--primary);
  color: #fff;
  font-size: 12px;
  font-weight: 700;
  transform: rotate(-45deg);
}
.slider output span { transform: rotate(45deg); }

/* Taskbar */
.taskbar {
  display: flex;
  align-items: stretch;
  flex: none;
  height: 40px;
  background: linear-gradient(to right, #e2e2dc 0, #dcd6d4 22%, #d6d7da 27%, #dcdcd9 35%, #d9d9e4 42%, #e3d7d9 47%, #d5d9e4 54%, #d6d7e1 65%, #dadde3 80%, #d8dce6 100%);
  color: #111;
  font: 12px/18px "Segoe UI", "Noto Sans", sans-serif;
}
.start { width: 48px; }
.start, .task, .notify { display: grid; place-items: center; }
.search { display: flex; align-items: center; gap: 11px; width: 344px; padding-left: 12px; border: 1px solid #c5c5c5; background: #fff; font-size: 14px; }
.search input { flex: 1; min-width: 0; border: 0; padding: 0; outline: 0; }
.search input::placeholder { color: #222; opacity: 1; }
.task { width: 48px; margin-right: 1px; }
.task.first { margin-right: 3px; }
.open { background: linear-gradient(#0078d7, #0078d7) center bottom / 40px 2px no-repeat; }
.current { background: #f0f0f0; border-bottom: 2px solid #0078d7; }
.tray { display: flex; align-items: center; gap: 8px; margin-left: auto; }
.clock { display: flex; flex-direction: column; justify-content: center; width: 70px; text-align: center; }
.notify { width: 36px; margin-right: 4px; padding-right: 2px; }
.taskbar::after { content: ""; width: 5px; margin-left: 6px; border-left: 1px solid #a9adb8; }
```
